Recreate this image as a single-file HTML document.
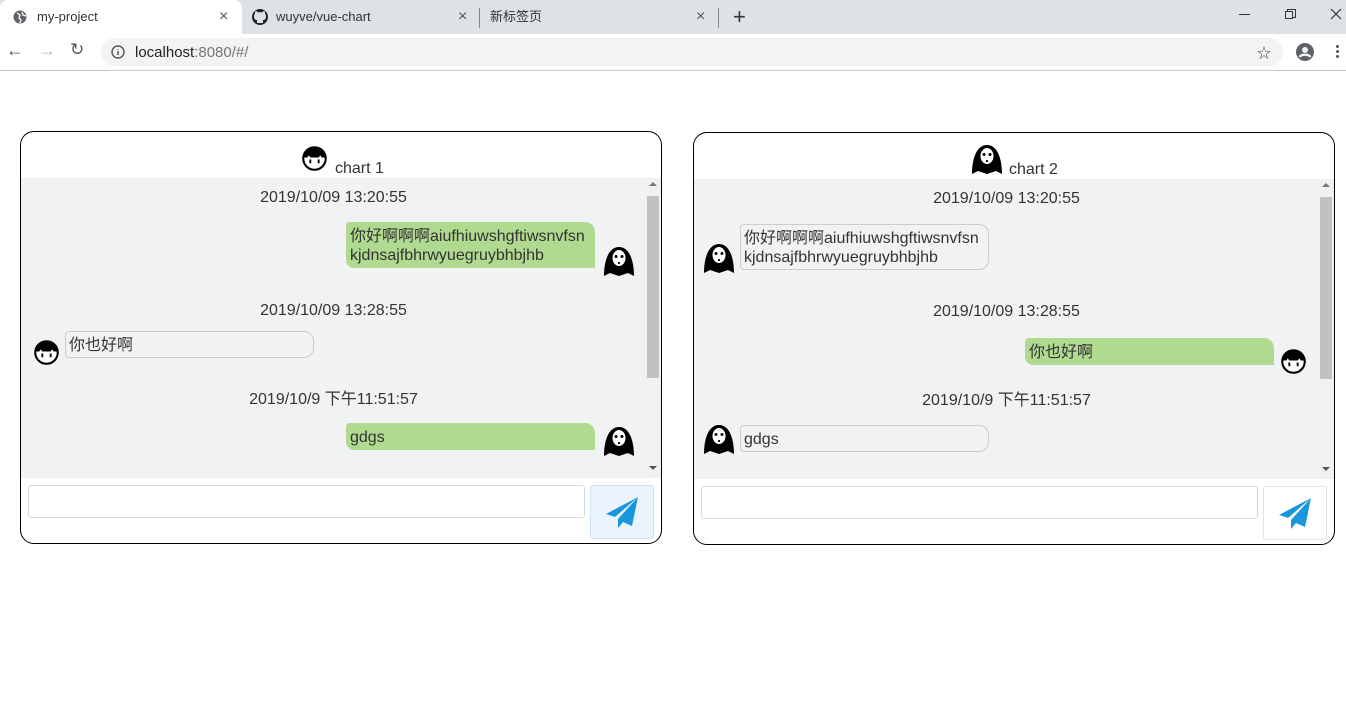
<!DOCTYPE html>
<html><head><meta charset="utf-8"><style>
*{margin:0;padding:0;box-sizing:border-box}
body{width:1346px;height:722px;overflow:hidden;background:#fff;font-family:"Liberation Sans","Noto Sans CJK SC",sans-serif;position:relative}
.a{position:absolute}
.tabbar{left:0;top:0;width:1346px;height:34px;background:#dee1e6}
.tab{top:0;height:34px;font-size:13px;color:#333;line-height:34px}
.addr{left:0;top:34px;width:1346px;height:37px;background:#fff;border-bottom:1px solid #c9c9c9}
.omni{left:101px;top:38px;width:1182px;height:28px;background:#f1f3f4;border-radius:14px}
.panel{border:1px solid #000;border-radius:14px;background:#fff;width:642px;height:413px;overflow:hidden}
.msgs{left:0;top:46px;width:640px;height:300px;background:#f1f2f4}
.ts{font-size:16px;color:#333;text-align:center;width:625px;left:0}
.bub{font-size:16px;color:#333;line-height:19px;padding:4px 3px 2px;width:249px;border:1px solid #ccc;white-space:nowrap}
.g{background:#b0da8f;border-color:#b0da8f;border-radius:4px 10px 0 8px}
.w{background:#f1f2f4;border-radius:4px 10px 10px 4px}
.sb{left:624px;top:46px;width:16px;height:300px;background:#f1f1f1}
.th{left:2px;top:18px;width:12px;height:182px;background:#c1c1c1}
.ta{border:1px solid #d9d9dd;border-radius:3px;background:#fff;width:557px;height:33px}
.btn{width:64px;height:54px;border:1px solid #d8dde3;border-radius:3px}
</style></head><body>
<svg width="0" height="0" style="position:absolute">
<defs>
<symbol id="ghost" viewBox="0 0 32 32"><path d="M1 31C1 17 5 2 16 2C27 2 31 17 31 31L25 28L16 31L7 28Z" fill="#000"/><ellipse cx="16" cy="13" rx="6.5" ry="8" fill="#fff"/><circle cx="13" cy="11.5" r="1.5"/><circle cx="19" cy="11.5" r="1.5"/><circle cx="16" cy="18" r="1.1"/></symbol>
<symbol id="girl" viewBox="0 0 24 24"><circle cx="12" cy="12" r="10.8" fill="#fff" stroke="#000" stroke-width="2"/><path d="M1.5 11A10.5 10.5 0 0 1 22.5 11L19 11L17.5 9L16 11L8 11L6.5 9L5 11Z" fill="#000"/><path d="M8 13v3.5M16 13v3.5" stroke="#000" stroke-width="1.8"/></symbol>
<symbol id="plane" viewBox="0 0 32 32"><path d="M32 1L0 18L9 21Z" fill="#1a96dc"/><path d="M32 1L12 23L12 32L17 26L26 30Z" fill="#1a96dc"/></symbol>
</defs></svg>

<div class="a tabbar"></div>
<div class="a" style="left:0;top:0;width:242px;height:34px;background:#fff;border-radius:8px 8px 0 0"></div>
<svg class="a" style="left:13px;top:10px" width="14" height="14" viewBox="0 0 14 14"><circle cx="7" cy="7" r="6.5" fill="#5f6368"/><path d="M4 3l3 2-1 3 2 2-1 3M9 2l1 3 3 1" stroke="#fff" stroke-width="1.3" fill="none"/></svg>
<div class="a tab" style="left:37px">my-project</div>
<div class="a tab" style="left:219px;font-size:16px;color:#555">×</div>
<svg class="a" style="left:252px;top:9px" width="16" height="16" viewBox="0 0 16 16"><circle cx="8" cy="8" r="8" fill="#222"/><path d="M5 14v-3c-2 0-3-1-3-4 0-1 .5-2 1-2.5 0-1 0-2 .5-2.5 1 0 2 1 2.5 1.2h4c.5-.2 1.5-1.2 2.5-1.2.5.5.5 1.5.5 2.5.5.5 1 1.5 1 2.5 0 3-1 4-3 4v3z" fill="#dee1e6"/></svg>
<div class="a tab" style="left:276px">wuyve/vue-chart</div>
<div class="a tab" style="left:458px;font-size:16px;color:#555">×</div>
<div class="a" style="left:479px;top:8px;width:1px;height:20px;background:#888"></div>
<div class="a tab" style="left:490px">新标签页</div>
<div class="a tab" style="left:696px;font-size:16px;color:#555">×</div>
<div class="a" style="left:718px;top:8px;width:1px;height:20px;background:#888"></div>
<div class="a tab" style="left:733px;font-size:22px;color:#333">+</div>
<div class="a" style="left:1239px;top:14px;width:11px;height:1px;background:#333"></div>
<div class="a" style="left:1287px;top:9px;width:9px;height:9px;border:1px solid #333"></div>
<div class="a" style="left:1285px;top:11px;width:8px;height:8px;border:1px solid #333;background:#dee1e6"></div>
<svg class="a" style="left:1330px;top:8px" width="12" height="12"><path d="M1 1L11 11M11 1L1 11" stroke="#333" stroke-width="1.2"/></svg>

<div class="a addr"></div>
<div class="a" style="left:6px;top:40px;font-size:18px;color:#555">←</div>
<div class="a" style="left:38px;top:40px;font-size:18px;color:#bbb">→</div>
<div class="a" style="left:70px;top:40px;font-size:17px;color:#555">↻</div>
<div class="a omni"></div>
<svg class="a" style="left:111px;top:45px" width="14" height="14" viewBox="0 0 14 14"><circle cx="7" cy="7" r="6" fill="none" stroke="#555" stroke-width="1.4"/><path d="M7 6v4M7 4v.5" stroke="#555" stroke-width="1.5"/></svg>
<div class="a" style="left:135px;top:44px;font-size:15px;color:#222">localhost<span style="color:#777">:8080/#/</span></div>
<div class="a" style="left:1257px;top:43px;font-size:14px;color:#555">☆</div>
<svg class="a" style="left:1296px;top:43px" width="18" height="18" viewBox="0 0 18 18"><circle cx="9" cy="9" r="9" fill="#5f6368"/><circle cx="9" cy="7" r="3" fill="#f1f3f4"/><path d="M3.5 14c2-3 9-3 11 0" stroke="#f1f3f4" stroke-width="2.2" fill="none"/></svg>
<div class="a" style="left:1336px;top:45px;width:3px;height:3px;background:#555;border-radius:2px;box-shadow:0 5px 0 #555,0 10px 0 #555"></div>

<!-- panel 1 -->
<div class="a panel" style="left:20px;top:131px">
 <svg class="a" style="left:281px;top:14px" width="25" height="25"><use href="#girl"/></svg>
 <div class="a" style="left:314px;top:28px;font-size:16px;color:#333">chart 1</div>
 <div class="a msgs"></div>
 <div class="a ts" style="top:57px">2019/10/09 13:20:55</div>
 <div class="a bub g" style="left:325px;top:90px">你好啊啊啊aiufhiuwshgftiwsnvfsn<br>kjdnsajfbhrwyuegruybhbjhb</div>
 <svg class="a" style="left:582px;top:113px" width="32" height="32"><use href="#ghost"/></svg>
 <div class="a ts" style="top:170px">2019/10/09 13:28:55</div>
 <svg class="a" style="left:13px;top:208px" width="25" height="25"><use href="#girl"/></svg>
 <div class="a bub w" style="left:44px;top:199px">你也好啊</div>
 <div class="a ts" style="top:253px">2019/10/9 下午11:51:57</div>
 <div class="a bub g" style="left:325px;top:291px">gdgs</div>
 <svg class="a" style="left:582px;top:293px" width="32" height="32"><use href="#ghost"/></svg>
 <div class="a sb"><div class="a th"></div><div class="a" style="left:4px;top:4px;border:4px solid transparent;border-bottom:4px solid #777;border-top:0"></div><div class="a" style="left:4px;top:288px;border:4px solid transparent;border-top:4px solid #555;border-bottom:0"></div></div>
 <div class="a ta" style="left:7px;top:353px"></div>
 <div class="a btn" style="left:569px;top:353px;background:#eaf4fe;border-color:#cfe2f5"></div>
 <svg class="a" style="left:585px;top:364px" width="32" height="32"><use href="#plane"/></svg>
</div>

<!-- panel 2 -->
<div class="a panel" style="left:693px;top:132px">
 <svg class="a" style="left:277px;top:10px" width="32" height="32"><use href="#ghost"/></svg>
 <div class="a" style="left:315px;top:28px;font-size:16px;color:#333">chart 2</div>
 <div class="a msgs"></div>
 <div class="a ts" style="top:57px">2019/10/09 13:20:55</div>
 <svg class="a" style="left:9px;top:109px" width="32" height="32"><use href="#ghost"/></svg>
 <div class="a bub w" style="left:46px;top:91px">你好啊啊啊aiufhiuwshgftiwsnvfsn<br>kjdnsajfbhrwyuegruybhbjhb</div>
 <div class="a ts" style="top:170px">2019/10/09 13:28:55</div>
 <div class="a bub g" style="left:331px;top:205px">你也好啊</div>
 <svg class="a" style="left:587px;top:216px" width="25" height="25"><use href="#girl"/></svg>
 <div class="a ts" style="top:253px">2019/10/9 下午11:51:57</div>
 <svg class="a" style="left:9px;top:290px" width="32" height="32"><use href="#ghost"/></svg>
 <div class="a bub w" style="left:46px;top:292px">gdgs</div>
 <div class="a sb"><div class="a th"></div><div class="a" style="left:4px;top:4px;border:4px solid transparent;border-bottom:4px solid #777;border-top:0"></div><div class="a" style="left:4px;top:288px;border:4px solid transparent;border-top:4px solid #555;border-bottom:0"></div></div>
 <div class="a ta" style="left:7px;top:353px"></div>
 <div class="a btn" style="left:569px;top:353px;background:#fff;border-color:#e3e3e3"></div>
 <svg class="a" style="left:585px;top:364px" width="32" height="32"><use href="#plane"/></svg>
</div>
</body></html>
